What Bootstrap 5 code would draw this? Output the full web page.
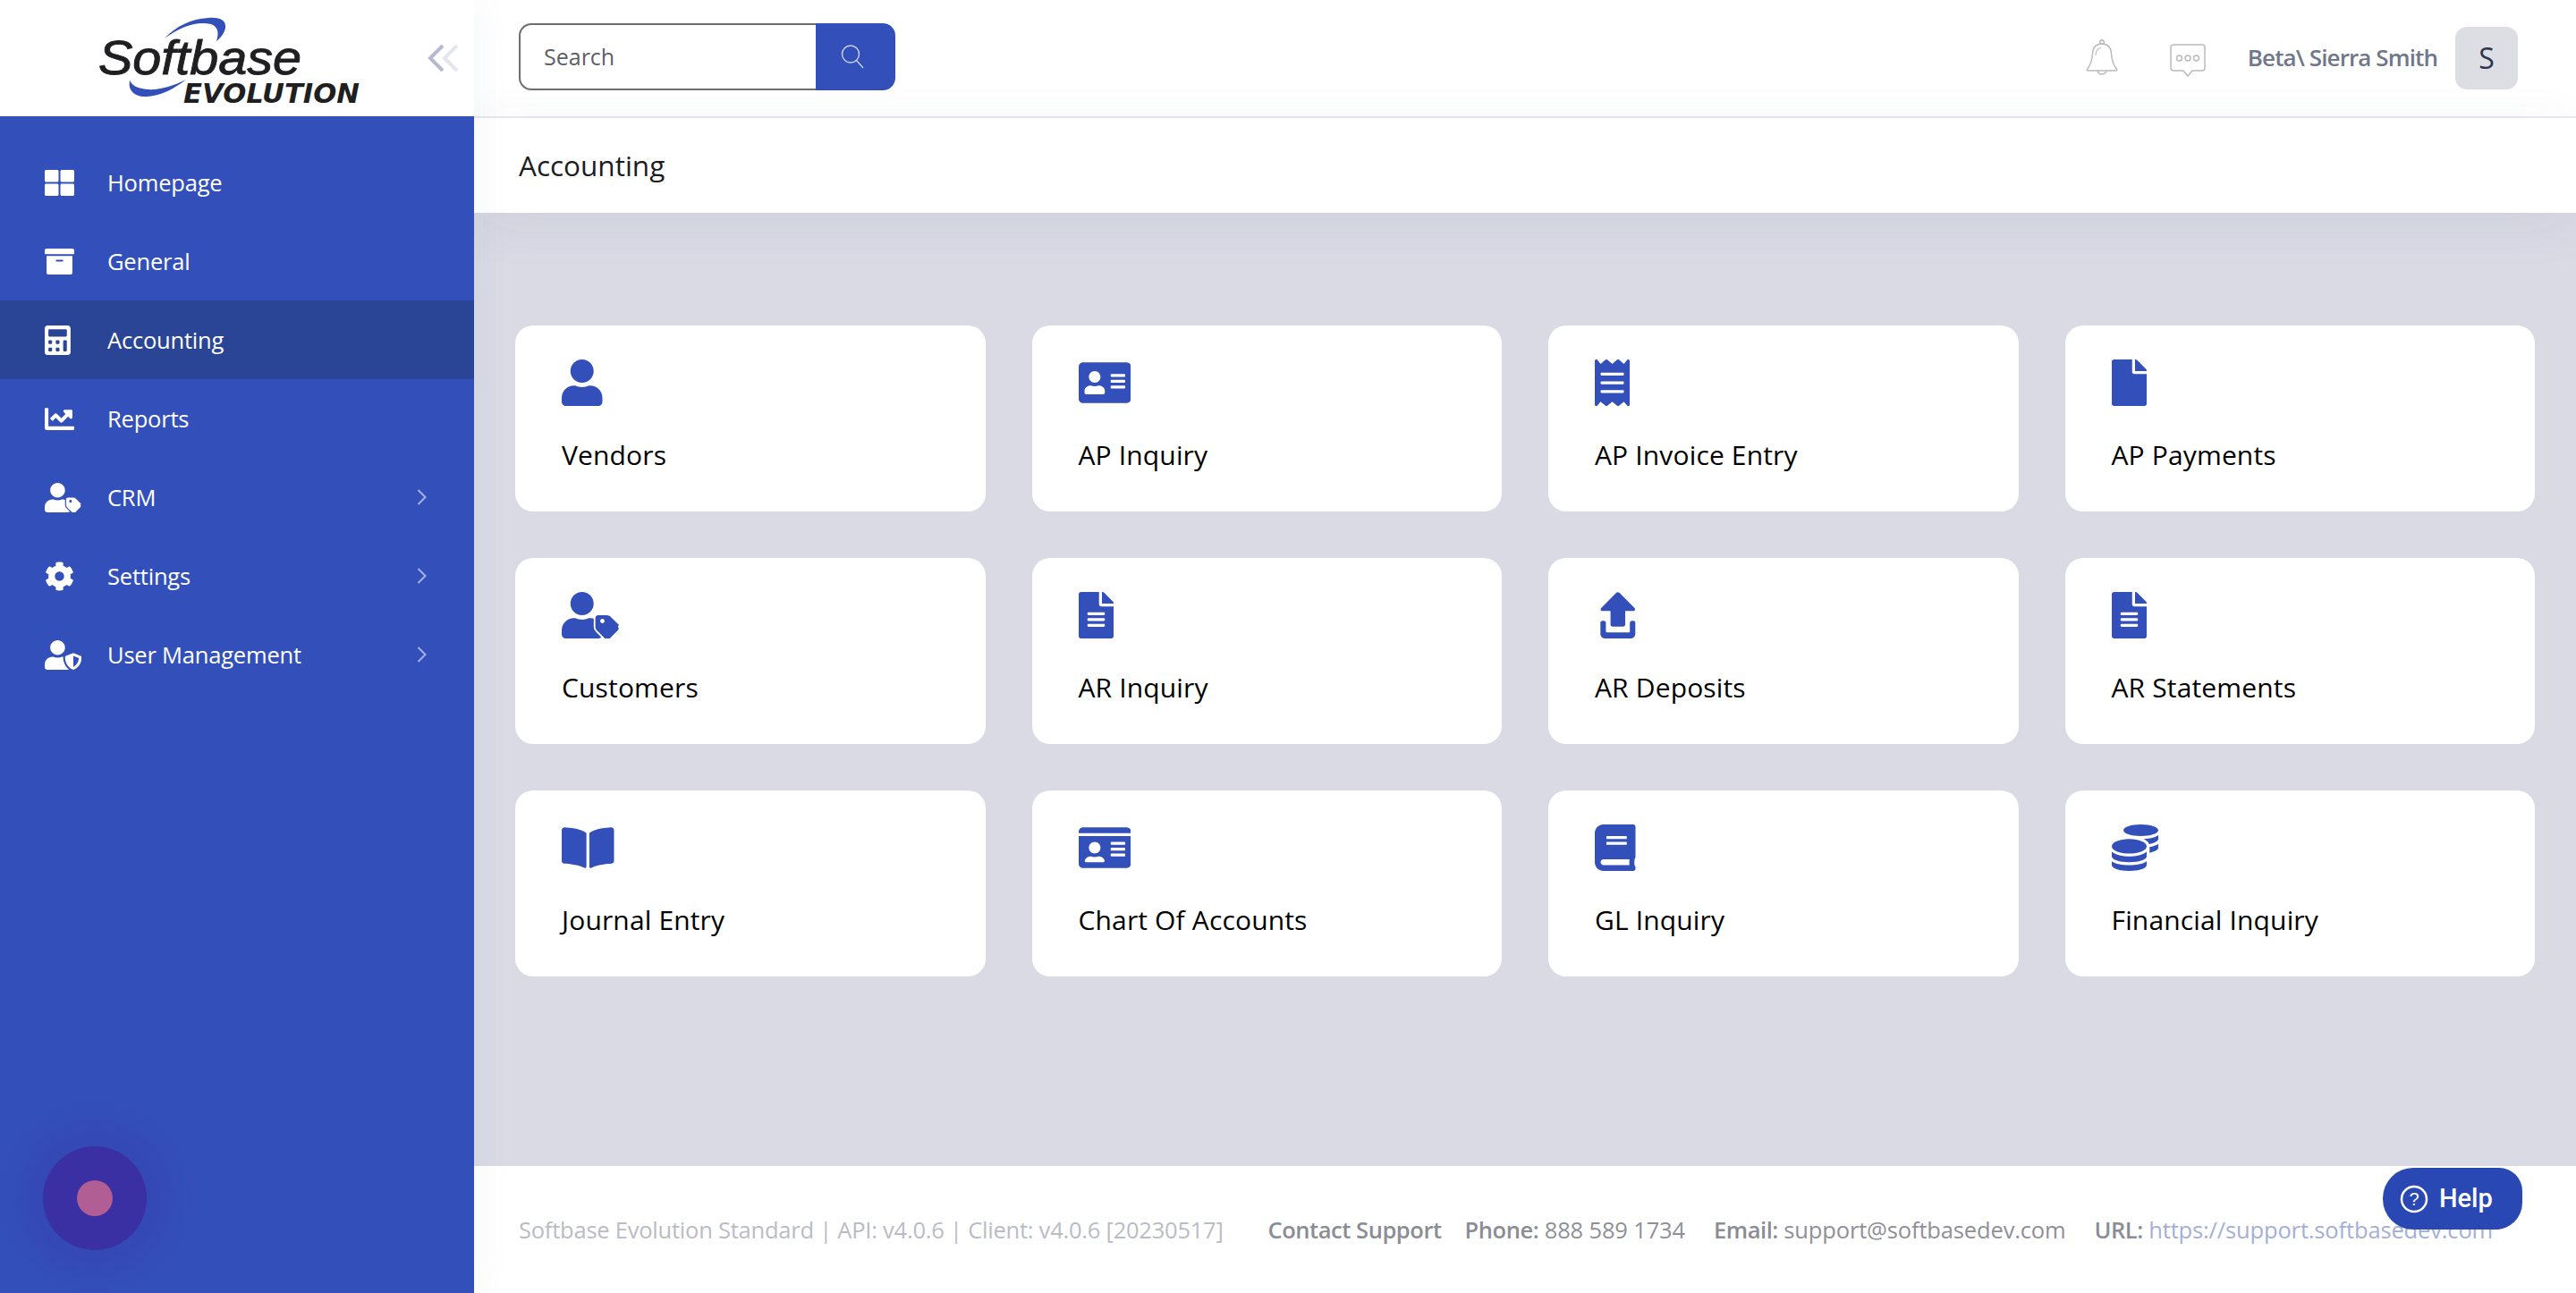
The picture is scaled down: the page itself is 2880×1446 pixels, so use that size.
<!DOCTYPE html>
<html lang="en">
<head>
<meta charset="utf-8">
<title>Accounting</title>
<link href="https://cdn.jsdelivr.net/npm/bootstrap@5.3.0/dist/css/bootstrap.min.css" rel="stylesheet">
<style>
:root{--brand:#3350ba;--ui:"Open Sans","Noto Sans",sans-serif}
html,body{height:100%}
body{margin:0;font-family:var(--ui);background:#fff;overflow:hidden}
.app-shell{height:100vh}
.side-panel{width:530px;flex:none;background:var(--brand);box-shadow:0 0 44px rgba(40,50,110,.05);z-index:3;position:relative}
.logo-bar{height:130px;background:#fff;padding-left:104px}
.logo-art{width:310px;height:110px;display:block;overflow:visible}
.collapse-ico{width:36px;height:34px;margin-left:64px}
.side-nav{margin-top:30px}
.side-nav .nav-link{height:88px;padding:0 50px;color:#fff;font-size:25.5px;line-height:1;letter-spacing:-.2px}
.side-nav .nav-link.is-current{background:#2b4596}
.side-ico{width:70px;flex:none;height:33px;fill:#fff;display:block}
.side-ico svg{height:33px;display:block}
.nav-label{padding-top:2px}
.nav-chev{width:11px;height:20px;margin-left:auto;margin-right:3px}
.rec-glow{position:absolute;left:-14px;top:1220px;width:240px;height:226px;border-radius:50%;background:radial-gradient(circle at 50% 53%,rgba(58,47,163,.22) 40%,rgba(58,47,163,.05) 60%,rgba(58,47,163,0) 72%)}
.rec-btn{position:absolute;left:48px;top:1282px;width:116px;height:116px;border-radius:50%;background:#3a2fa3}
.rec-dot{width:40px;height:40px;border-radius:50%;background:#b05e94}
.top-bar{height:132px;background:#fff;border-bottom:2px solid #e9eaee;padding:0 65px 0 50px}
.search-wrap{width:421px;height:75px;flex-wrap:nowrap;margin-top:-4px}
.search-wrap .form-control{height:75px;border:2px solid #6e6e6e;border-right:0;border-radius:14px 0 0 14px;font-family:var(--ui);font-size:25px;padding:0 26px;color:#555;box-shadow:none}
.search-wrap .form-control::placeholder{color:#5e6066;opacity:1}
.search-btn{width:90px;height:75px;flex:none;background:var(--brand);border:0;border-radius:0 14px 14px 0;padding:0 6px 0 0}
.bell-ico{width:36px;height:40px;margin-right:58px;margin-top:-2px}
.chat-ico{width:40px;height:37px;margin-right:47px;margin-top:4px}
.user-name{font-size:26px;font-weight:600;color:#70778a;letter-spacing:-.9px;margin-right:20px;margin-top:-2px}
.user-pill{width:70px;height:70px;background:#dcdee3;border-radius:13px;color:#2c3650;font-size:32px}
.page-head{height:106px;background:#fff;padding-left:50px;font-size:31.5px;color:#1c1d22;box-shadow:0 12px 60px rgba(60,65,110,.07);position:relative;z-index:2}
.work-area{flex:1 1 0;min-height:0;background:#d9dae4;padding:126px 46px 0;display:grid;grid-template-columns:repeat(4,1fr);gap:52px;align-content:start}
.tile{height:208px;border:0;border-radius:20px;background:#fff;padding:38px 52px 0;align-items:flex-start}
.tile svg{height:52px;display:block;fill:#3350ba}
.tile-name{font-size:30px;line-height:48px;margin-top:31px;color:#000;white-space:nowrap;letter-spacing:.15px}
.foot-bar{height:142px;background:#fff;padding-left:50px;font-size:25.5px;white-space:nowrap;position:relative}
.foot-ver{color:#b9bcc4;letter-spacing:-.23px}
.foot-info{color:#8f9097;margin-left:50px;letter-spacing:-.15px}
.foot-info b{font-weight:600;color:#8b8d95;letter-spacing:-.45px}
.foot-info span{margin-left:32px}
.foot-info span:first-of-type{margin-left:26px}
.foot-info a{color:#a4afd6;text-decoration:none}
.help-fab{position:absolute;left:2134px;top:2px;width:156px;height:69px;border-radius:34px 26px 30px 34px;background:#2a48b4;color:#fff;font-family:Roboto,sans-serif;font-size:29px;font-weight:500;gap:12px;padding-left:19px;z-index:5}
.help-fab svg{width:32px;height:32px;flex:none}
</style>
</head>
<body>
<div class="app-shell d-flex">
  <aside class="side-panel d-flex flex-column">
    <div class="logo-bar d-flex align-items-center">
      <svg class="logo-art" viewBox="104 10 310 110" role="img" aria-label="Softbase Evolution">
        <path d="M184 43C197 29 214 21 233 20C245 19 253 22 252 31C251 37 247 42 242 46C245 37 244 30 236 27C219 23 200 31 184 43Z" fill="#3350ba"/>
        <path d="M145 90C143 100 149 109 165 108C180 107 195 99 208 89C194 96 178 101 165 100C154 99 148 96 145 90Z" fill="#3350ba"/>
        <text x="110" y="83" font-family="Liberation Sans" font-style="italic" font-size="53" fill="#1f1f22" stroke="#1f1f22" stroke-width=".9" textLength="227" lengthAdjust="spacingAndGlyphs">Softbase</text>
        <text x="205" y="115" font-family="DejaVu Sans" font-weight="700" font-style="oblique" font-size="31" fill="#1f1f22" textLength="197" lengthAdjust="spacingAndGlyphs">EVOLUTION</text>
      </svg>
      <svg class="collapse-ico" viewBox="0 0 36 34" aria-hidden="true"><path d="M17 3 3 17l14 14" fill="none" stroke="#b4bacf" stroke-width="4"/><path d="M33 3 19 17l14 14" fill="none" stroke="#e4e6ef" stroke-width="4"/></svg>
    </div>
    <nav class="nav flex-column side-nav">
      <a class="nav-link d-flex align-items-center" href="#"><span class="side-ico"><svg viewBox="0 0 512 512"><path d="M296 32h192c13.255 0 24 10.745 24 24v160c0 13.255-10.745 24-24 24H296c-13.255 0-24-10.745-24-24V56c0-13.255 10.745-24 24-24zm-80 0H24C10.745 32 0 42.745 0 56v160c0 13.255 10.745 24 24 24h192c13.255 0 24-10.745 24-24V56c0-13.255-10.745-24-24-24zM0 296v160c0 13.255 10.745 24 24 24h192c13.255 0 24-10.745 24-24V296c0-13.255-10.745-24-24-24H24c-13.255 0-24 10.745-24 24zm296 184h192c13.255 0 24-10.745 24-24V296c0-13.255-10.745-24-24-24H296c-13.255 0-24 10.745-24 24v160c0 13.255 10.745 24 24 24z"/></svg></span><span class="nav-label">Homepage</span></a>
      <a class="nav-link d-flex align-items-center" href="#"><span class="side-ico"><svg viewBox="0 0 512 512"><path d="M32 448c0 17.7 14.3 32 32 32h384c17.7 0 32-14.3 32-32V160H32v288zm160-212c0-6.6 5.4-12 12-12h104c6.6 0 12 5.4 12 12v8c0 6.6-5.4 12-12 12H204c-6.6 0-12-5.4-12-12v-8zM480 32H32C14.3 32 0 46.3 0 64v48c0 8.8 7.2 16 16 16h480c8.8 0 16-7.2 16-16V64c0-17.7-14.3-32-32-32z"/></svg></span><span class="nav-label">General</span></a>
      <a class="nav-link d-flex align-items-center is-current" href="#"><span class="side-ico"><svg viewBox="0 0 448 512"><path d="M400 0H48C22.4 0 0 22.4 0 48v416c0 25.6 22.4 48 48 48h352c25.6 0 48-22.4 48-48V48c0-25.6-22.4-48-48-48zM128 435.2c0 6.4-6.4 12.8-12.8 12.8H76.8c-6.4 0-12.8-6.4-12.8-12.8v-38.4c0-6.4 6.4-12.8 12.8-12.8h38.4c6.4 0 12.8 6.4 12.8 12.8v38.4zm0-128c0 6.4-6.4 12.8-12.8 12.8H76.8c-6.4 0-12.8-6.4-12.8-12.8v-38.4c0-6.4 6.4-12.8 12.8-12.8h38.4c6.4 0 12.8 6.4 12.8 12.8v38.4zm128 128c0 6.4-6.4 12.8-12.8 12.8h-38.4c-6.4 0-12.8-6.4-12.8-12.8v-38.4c0-6.4 6.4-12.8 12.8-12.8h38.4c6.4 0 12.8 6.4 12.8 12.8v38.4zm0-128c0 6.4-6.4 12.8-12.8 12.8h-38.4c-6.4 0-12.8-6.4-12.8-12.8v-38.4c0-6.4 6.4-12.8 12.8-12.8h38.4c6.4 0 12.8 6.4 12.8 12.8v38.4zm128 128c0 6.4-6.4 12.8-12.8 12.8h-38.4c-6.4 0-12.8-6.4-12.8-12.8V268.8c0-6.4 6.4-12.8 12.8-12.8h38.4c6.4 0 12.8 6.4 12.8 12.8v166.4zm0-256c0 6.4-6.4 12.8-12.8 12.8H76.8c-6.4 0-12.8-6.4-12.8-12.8V76.8C64 70.4 70.4 64 76.8 64h294.4c6.4 0 12.8 6.4 12.8 12.8v102.4z"/></svg></span><span class="nav-label">Accounting</span></a>
      <a class="nav-link d-flex align-items-center" href="#"><span class="side-ico"><svg viewBox="0 0 512 512"><path d="M496 384H64V80c0-8.84-7.16-16-16-16H16C7.16 64 0 71.16 0 80v336c0 17.67 14.33 32 32 32h464c8.84 0 16-7.16 16-16v-32c0-8.84-7.16-16-16-16zM464 96H345.94c-21.38 0-32.09 25.85-16.97 40.97l32.4 32.4L288 242.75l-73.37-73.37c-12.5-12.5-32.76-12.5-45.25 0l-68.69 68.69c-6.25 6.25-6.25 16.38 0 22.63l22.62 22.62c6.25 6.25 16.38 6.25 22.63 0L192 237.25l73.37 73.37c12.5 12.5 32.76 12.5 45.25 0l96-96 32.4 32.4c15.12 15.12 40.97 4.41 40.97-16.97V112c.01-8.84-7.15-16-15.99-16z"/></svg></span><span class="nav-label">Reports</span></a>
      <a class="nav-link d-flex align-items-center" href="#"><span class="side-ico"><svg viewBox="0 0 640 512"><path d="M224 256c70.7 0 128-57.3 128-128S294.7 0 224 0 96 57.3 96 128s57.3 128 128 128zm89.6 32h-16.7c-22.2 10.2-46.9 16-72.9 16s-50.6-5.8-72.9-16h-16.7C60.2 288 0 348.2 0 422.4V464c0 26.5 21.5 48 48 48h352c26.5 0 48-21.5 48-48v-41.6c0-74.2-60.2-134.4-134.4-134.4z"/><path d="M630.6 364.9l-90.3-90.2c-12-12-28.3-18.7-45.3-18.7h-92.5c-17.7 0-32 14.3-32 32v92.5c0 17 6.7 33.3 18.7 45.3l90.3 90.2c12.5 12.5 32.8 12.5 45.3 0l92.5-92.5c12.6-12.5 12.6-32.7.3-45.3z" fill="#3350ba" stroke="#3350ba" stroke-width="36"/><path fill-rule="evenodd" d="M630.6 364.9l-90.3-90.2c-12-12-28.3-18.7-45.3-18.7h-92.5c-17.7 0-32 14.3-32 32v92.5c0 17 6.7 33.3 18.7 45.3l90.3 90.2c12.5 12.5 32.8 12.5 45.3 0l92.5-92.5c12.6-12.5 12.6-32.7.3-45.3zm-182.8-21c-13.3 0-24-10.7-24-24s10.7-24 24-24 24 10.7 24 24c0 13.2-10.7 24-24 24z"/></svg></span><span class="nav-label">CRM</span><svg class="nav-chev" viewBox="0 0 11 20"><path d="M1.5 2 9.5 10l-8 8" fill="none" stroke="#a4b1e2" stroke-width="2"/></svg></a>
      <a class="nav-link d-flex align-items-center" href="#"><span class="side-ico"><svg viewBox="0 0 512 512"><path d="M487.4 315.7l-42.6-24.6c4.3-23.2 4.3-47 0-70.2l42.6-24.6c4.9-2.8 7.1-8.6 5.5-14-11.1-35.6-30-67.8-54.7-94.6-3.8-4.1-10-5.1-14.8-2.3L380.8 110c-17.9-15.4-38.5-27.3-60.8-35.1V25.8c0-5.6-3.9-10.5-9.4-11.7-36.7-8.2-74.3-7.8-109.2 0-5.5 1.2-9.4 6.1-9.4 11.7V75c-22.2 7.9-42.8 19.8-60.8 35.1L88.7 85.5c-4.9-2.8-11-1.9-14.8 2.3-24.7 26.7-43.6 58.9-54.7 94.6-1.7 5.4.6 11.2 5.5 14L67.3 221c-4.3 23.2-4.3 47 0 70.2l-42.6 24.6c-4.9 2.8-7.1 8.6-5.5 14 11.1 35.6 30 67.8 54.7 94.6 3.8 4.1 10 5.1 14.8 2.3l42.6-24.6c17.9 15.4 38.5 27.3 60.8 35.1v49.2c0 5.6 3.9 10.5 9.4 11.7 36.7 8.2 74.3 7.8 109.2 0 5.5-1.2 9.4-6.1 9.4-11.7v-49.2c22.2-7.9 42.8-19.8 60.8-35.1l42.6 24.6c4.9 2.8 11 1.9 14.8-2.3 24.7-26.7 43.6-58.9 54.7-94.6 1.5-5.5-.7-11.3-5.6-14.1zM256 336c-44.1 0-80-35.9-80-80s35.9-80 80-80 80 35.9 80 80-35.9 80-80 80z"/></svg></span><span class="nav-label">Settings</span><svg class="nav-chev" viewBox="0 0 11 20"><path d="M1.5 2 9.5 10l-8 8" fill="none" stroke="#a4b1e2" stroke-width="2"/></svg></a>
      <a class="nav-link d-flex align-items-center" href="#"><span class="side-ico"><svg viewBox="0 0 640 512"><path d="M622.3 271.1l-115.2-45c-4.1-1.6-12.6-3.7-22.2 0l-115.2 45c-10.7 4.2-17.7 14-17.7 24.9 0 111.6 68.7 188.8 132.9 213.9 9.6 3.7 18 1.6 22.2 0C558.4 489.9 640 420.5 640 296c0-10.9-7-20.7-17.7-24.9zM496 462.4V273.3l95.5 37.3c-5.6 87.1-60.9 135.4-95.5 151.8zM224 256c70.7 0 128-57.3 128-128S294.7 0 224 0 96 57.3 96 128s57.3 128 128 128zm96 40c0-2.5.8-4.8 1.1-7.2-2.5-.1-4.9-.8-7.5-.8h-16.7c-22.2 10.2-46.9 16-72.9 16s-50.6-5.8-72.9-16h-16.7C60.2 288 0 348.2 0 422.4V464c0 26.5 21.5 48 48 48h352c6.8 0 13.3-1.5 19.2-4-54-42.9-99.2-116.7-99.2-212z"/></svg></span><span class="nav-label">User Management</span><svg class="nav-chev" viewBox="0 0 11 20"><path d="M1.5 2 9.5 10l-8 8" fill="none" stroke="#a4b1e2" stroke-width="2"/></svg></a>
    </nav>
    <div class="rec-glow"></div>
    <div class="rec-btn d-flex align-items-center justify-content-center"><div class="rec-dot"></div></div>
  </aside>
  <main class="d-flex flex-column flex-grow-1" style="min-width:0">
    <header class="top-bar d-flex align-items-center">
      <div class="input-group search-wrap">
        <input class="form-control" type="text" placeholder="Search" aria-label="Search">
        <button class="search-btn d-flex align-items-center justify-content-center" type="button" aria-label="Search"><svg width="28" height="28" viewBox="0 0 28 28"><circle cx="12" cy="11.5" r="9.5" fill="none" stroke="#c6cff0" stroke-width="1.5"/><path d="M18.5 18.5 26 27" stroke="#c6cff0" stroke-width="1.5" fill="none"/></svg></button>
      </div>
      <div class="ms-auto d-flex align-items-center">
        <svg class="bell-ico" viewBox="0 0 36 40" fill="none" stroke="#b9babd" stroke-width="1.5"><path d="M18 5c-7 0-10 4.5-10.5 11-.5 7-1.5 12-6 17.5-.6.8 0 1.5 1 1.5h31c1 0 1.6-.7 1-1.5-4.5-5.5-5.5-10.5-6-17.500C28 9.500 25 5 18 5z"/><circle cx="18" cy="3" r="2.3"/><path d="M13 35.500c1 2.500 3 3.500 5 3.500s4-1 5-3.500"/><path d="M11 18c.2-4.500 2.500-8 6-8.500" stroke-width="1.2"/></svg>
        <svg class="chat-ico" viewBox="0 0 40 37" fill="none" stroke="#b9babd" stroke-width="1.5"><path d="M4 1h32a3 3 0 0 1 3 3v23a3 3 0 0 1-3 3H25l-5 6-5-6H4a3 3 0 0 1-3-3V4a3 3 0 0 1 3-3z"/><circle cx="10.5" cy="16" r="3"/><circle cx="20" cy="16" r="3"/><circle cx="29.5" cy="16" r="3"/></svg>
        <span class="user-name">Beta\ Sierra Smith</span>
        <span class="user-pill d-flex align-items-center justify-content-center">S</span>
      </div>
    </header>
    <div class="page-head d-flex align-items-center">Accounting</div>
    <section class="work-area">
      <div class="card tile"><svg viewBox="0 0 448 512"><path d="M224 256c70.7 0 128-57.3 128-128S294.7 0 224 0 96 57.3 96 128s57.3 128 128 128zm89.6 32h-16.7c-22.2 10.2-46.9 16-72.9 16s-50.6-5.8-72.9-16h-16.7C60.2 288 0 348.2 0 422.4V464c0 26.5 21.5 48 48 48h352c26.5 0 48-21.5 48-48v-41.6c0-74.2-60.2-134.4-134.4-134.4z"/></svg><div class="tile-name">Vendors</div></div>
      <div class="card tile"><svg viewBox="0 0 576 512"><path d="M528 32H48C21.5 32 0 53.5 0 80v352c0 26.5 21.5 48 48 48h480c26.5 0 48-21.5 48-48V80c0-26.5-21.5-48-48-48zm-352 96c35.3 0 64 28.7 64 64s-28.7 64-64 64-64-28.7-64-64 28.7-64 64-64zm112 236.8c0 10.6-10 19.2-22.4 19.2H86.4C74 384 64 375.4 64 364.8v-19.2c0-31.8 30.1-57.6 67.2-57.6h5c12.3 5.1 25.7 8 39.8 8s27.6-2.9 39.8-8h5c37.1 0 67.2 25.8 67.2 57.6v19.2zM512 312c0 4.4-3.6 8-8 8H360c-4.4 0-8-3.6-8-8v-16c0-4.4 3.6-8 8-8h144c4.4 0 8 3.6 8 8v16zm0-64c0 4.4-3.6 8-8 8H360c-4.4 0-8-3.6-8-8v-16c0-4.4 3.6-8 8-8h144c4.4 0 8 3.6 8 8v16zm0-64c0 4.4-3.6 8-8 8H360c-4.4 0-8-3.6-8-8v-16c0-4.4 3.6-8 8-8h144c4.4 0 8 3.6 8 8v16z"/></svg><div class="tile-name">AP Inquiry</div></div>
      <div class="card tile"><svg viewBox="0 0 384 512"><path d="M358.4 3.2L320 48 265.6 3.2a15.9 15.9 0 0 0-19.2 0L192 48 137.6 3.2a15.9 15.9 0 0 0-19.2 0L64 48 25.6 3.2C15-4.7 0 2.8 0 16v480c0 13.2 15 20.7 25.6 12.8L64 464l54.4 44.8a15.9 15.9 0 0 0 19.2 0L192 464l54.4 44.8a15.9 15.9 0 0 0 19.2 0L320 464l38.4 44.8c10.5 7.9 25.6.4 25.6-12.8V16c0-13.2-15-20.7-25.6-12.8zM320 360c0 4.4-3.6 8-8 8H72c-4.4 0-8-3.6-8-8v-16c0-4.4 3.6-8 8-8h240c4.4 0 8 3.6 8 8v16zm0-96c0 4.4-3.6 8-8 8H72c-4.4 0-8-3.6-8-8v-16c0-4.4 3.6-8 8-8h240c4.4 0 8 3.6 8 8v16zm0-96c0 4.4-3.6 8-8 8H72c-4.4 0-8-3.6-8-8v-16c0-4.4 3.6-8 8-8h240c4.4 0 8 3.6 8 8v16z"/></svg><div class="tile-name">AP Invoice Entry</div></div>
      <div class="card tile"><svg viewBox="0 0 384 512"><path d="M224 136V0H24C10.7 0 0 10.7 0 24v464c0 13.3 10.7 24 24 24h336c13.3 0 24-10.7 24-24V160H248c-13.2 0-24-10.8-24-24zm160-14.1v6.1H256V0h6.1c6.4 0 12.5 2.5 17 7l97.9 98c4.5 4.5 7 10.6 7 16.9z"/></svg><div class="tile-name">AP Payments</div></div>

      <div class="card tile"><svg viewBox="0 0 640 512"><path d="M224 256c70.7 0 128-57.3 128-128S294.7 0 224 0 96 57.3 96 128s57.3 128 128 128zm89.6 32h-16.7c-22.2 10.2-46.9 16-72.9 16s-50.6-5.8-72.9-16h-16.7C60.2 288 0 348.2 0 422.4V464c0 26.5 21.5 48 48 48h352c26.5 0 48-21.5 48-48v-41.6c0-74.2-60.2-134.4-134.4-134.4z"/><path d="M630.6 364.9l-90.3-90.2c-12-12-28.3-18.7-45.3-18.7h-92.5c-17.7 0-32 14.3-32 32v92.5c0 17 6.7 33.3 18.7 45.3l90.3 90.2c12.5 12.5 32.8 12.5 45.3 0l92.5-92.5c12.6-12.5 12.6-32.7.3-45.3z" fill="#fff" stroke="#fff" stroke-width="36"/><path fill-rule="evenodd" d="M630.6 364.9l-90.3-90.2c-12-12-28.3-18.7-45.3-18.7h-92.5c-17.7 0-32 14.3-32 32v92.5c0 17 6.7 33.3 18.7 45.3l90.3 90.2c12.5 12.5 32.8 12.5 45.3 0l92.5-92.5c12.6-12.5 12.6-32.7.3-45.3zm-182.8-21c-13.3 0-24-10.7-24-24s10.7-24 24-24 24 10.7 24 24c0 13.2-10.7 24-24 24z"/></svg><div class="tile-name">Customers</div></div>
      <div class="card tile"><svg viewBox="0 0 384 512"><path d="M224 136V0H24C10.7 0 0 10.7 0 24v464c0 13.3 10.7 24 24 24h336c13.3 0 24-10.7 24-24V160H248c-13.2 0-24-10.8-24-24zm64 236c0 6.6-5.4 12-12 12H108c-6.6 0-12-5.4-12-12v-8c0-6.6 5.4-12 12-12h168c6.6 0 12 5.4 12 12v8zm0-64c0 6.6-5.4 12-12 12H108c-6.6 0-12-5.4-12-12v-8c0-6.6 5.4-12 12-12h168c6.6 0 12 5.4 12 12v8zm0-72v8c0 6.6-5.4 12-12 12H108c-6.6 0-12-5.4-12-12v-8c0-6.6 5.4-12 12-12h168c6.6 0 12 5.4 12 12zm96-114.1v6.1H256V0h6.1c6.4 0 12.5 2.5 17 7l97.9 98c4.5 4.5 7 10.6 7 16.9z"/></svg><div class="tile-name">AR Inquiry</div></div>
      <div class="card tile"><svg viewBox="-30 0 448 512"><path d="M208 8 40 178c-11 12-3 32 14 32h89v150c0 12 10 22 22 22h118c12 0 22-10 22-22V210h89c17 0 25-20 14-32L240 8c-9-9-23-9-32 0z"/><path d="M32 340v120c0 29 23 52 52 52h280c29 0 52-23 52-52V340c0-12-10-22-22-22h-16c-12 0-22 10-22 22v92c0 8-6 14-14 14H106c-8 0-14-6-14-14v-92c0-12-10-22-22-22H54c-12 0-22 10-22 22z"/></svg><div class="tile-name">AR Deposits</div></div>
      <div class="card tile"><svg viewBox="0 0 384 512"><path d="M224 136V0H24C10.7 0 0 10.7 0 24v464c0 13.3 10.7 24 24 24h336c13.3 0 24-10.7 24-24V160H248c-13.2 0-24-10.8-24-24zm64 236c0 6.6-5.4 12-12 12H108c-6.6 0-12-5.4-12-12v-8c0-6.6 5.4-12 12-12h168c6.6 0 12 5.4 12 12v8zm0-64c0 6.6-5.4 12-12 12H108c-6.6 0-12-5.4-12-12v-8c0-6.6 5.4-12 12-12h168c6.6 0 12 5.4 12 12v8zm0-72v8c0 6.6-5.4 12-12 12H108c-6.6 0-12-5.4-12-12v-8c0-6.6 5.4-12 12-12h168c6.6 0 12 5.4 12 12zm96-114.1v6.1H256V0h6.1c6.4 0 12.5 2.5 17 7l97.9 98c4.5 4.5 7 10.6 7 16.9z"/></svg><div class="tile-name">AR Statements</div></div>

      <div class="card tile"><svg viewBox="0 0 576 512"><path d="M542.22 32.05c-54.8 3.11-163.72 14.43-230.96 55.59-4.64 2.84-7.27 7.89-7.27 13.17v363.87c0 11.55 12.63 18.85 23.28 13.49 69.18-34.82 169.23-44.32 218.7-46.92 16.89-.89 30.02-14.43 30.02-30.66V62.75c.01-17.71-15.35-31.74-33.77-30.7zM264.73 87.64C197.5 46.48 88.58 35.17 33.78 32.05 15.36 31.01 0 45.04 0 62.75V400.6c0 16.24 13.13 29.78 30.02 30.66 49.49 2.6 149.59 12.11 218.77 46.95 10.62 5.35 23.21-1.94 23.21-13.46V100.63c0-5.29-2.62-10.14-7.27-12.99z"/></svg><div class="tile-name">Journal Entry</div></div>
      <div class="card tile"><svg viewBox="0 0 576 512"><path d="M528 32H48C21.5 32 0 53.5 0 80v16h576V80c0-26.5-21.5-48-48-48zM0 432c0 26.5 21.5 48 48 48h480c26.5 0 48-21.5 48-48V128H0v304zm352-232c0-4.4 3.6-8 8-8h144c4.4 0 8 3.6 8 8v16c0 4.4-3.6 8-8 8H360c-4.4 0-8-3.6-8-8v-16zm0 64c0-4.4 3.6-8 8-8h144c4.4 0 8 3.6 8 8v16c0 4.4-3.6 8-8 8H360c-4.4 0-8-3.6-8-8v-16zm0 64c0-4.4 3.6-8 8-8h144c4.4 0 8 3.6 8 8v16c0 4.4-3.6 8-8 8H360c-4.4 0-8-3.6-8-8v-16zM176 192c35.3 0 64 28.7 64 64s-28.7 64-64 64-64-28.7-64-64 28.7-64 64-64zM67.1 396.2C75.5 370.5 99.6 352 128 352h8.2c12.3 5.1 25.7 8 39.8 8s27.6-2.9 39.8-8h8.2c28.4 0 52.5 18.5 60.9 44.2 3.2 9.9-5.2 19.8-15.6 19.8H82.7c-10.4 0-18.8-10-15.6-19.8z"/></svg><div class="tile-name">Chart Of Accounts</div></div>
      <div class="card tile"><svg viewBox="0 0 448 512"><path d="M448 360V24c0-13.3-10.7-24-24-24H96C43 0 0 43 0 96v320c0 53 43 96 96 96h328c13.3 0 24-10.7 24-24v-16c0-7.5-3.5-14.3-8.9-18.7-4.2-15.4-4.2-59.3 0-74.7 5.4-4.3 8.9-11.1 8.9-18.6zM128 134c0-3.3 2.7-6 6-6h212c3.3 0 6 2.7 6 6v20c0 3.3-2.7 6-6 6H134c-3.3 0-6-2.7-6-6v-20zm0 64c0-3.3 2.7-6 6-6h212c3.3 0 6 2.7 6 6v20c0 3.3-2.7 6-6 6H134c-3.3 0-6-2.7-6-6v-20zm253.4 250H96c-17.7 0-32-14.3-32-32 0-17.6 14.4-32 32-32h285.4c-1.9 17.1-1.9 46.9 0 64z"/></svg><div class="tile-name">GL Inquiry</div></div>
      <div class="card tile"><svg viewBox="0 0 512 512"><path d="M0 405.3V448c0 35.3 86 64 192 64s192-28.7 192-64v-42.7C342.7 434.4 267.2 448 192 448S41.3 434.4 0 405.3zM320 128c106 0 192-28.7 192-64S426 0 320 0 128 28.7 128 64s86 64 192 64zM0 300.4V352c0 35.3 86 64 192 64s192-28.7 192-64v-51.6c-41.3 34-116.9 51.6-192 51.6S41.3 334.4 0 300.4zm416 11c57.3-11.1 96-31.7 96-55.4v-42.7c-23.2 16.4-57.3 27.6-96 34.5v63.6zM192 160C86 160 0 195.8 0 240s86 80 192 80 192-35.8 192-80-86-80-192-80zm219.3 56.3c60-10.8 100.7-32 100.7-56.3v-42.7c-35.5 25.1-96.5 38.6-160.7 41.8 29.5 14.3 51.2 33.5 60 57.2z"/></svg><div class="tile-name">Financial Inquiry</div></div>
    </section>
    <footer class="foot-bar d-flex align-items-center">
      <span class="foot-ver">Softbase Evolution Standard | API: v4.0.6 | Client: v4.0.6 [20230517]</span>
      <span class="foot-info"><b>Contact Support</b><span><b>Phone:</b> 888 589 1734</span><span><b>Email:</b> support@softbasedev.com</span><span><b>URL:</b> <a href="#">https://support.softbasedev.com</a></span></span>
      <div class="help-fab d-flex align-items-center"><svg viewBox="0 0 32 32"><circle cx="16" cy="16" r="14" fill="none" stroke="#fff" stroke-width="2.5"/><text x="16" y="23" text-anchor="middle" font-family="Liberation Sans" font-size="20" fill="#fff">?</text></svg>Help</div>
    </footer>
  </main>
</div>
<script src="https://cdn.jsdelivr.net/npm/bootstrap@5.3.0/dist/js/bootstrap.bundle.min.js"></script>
</body>
</html>
